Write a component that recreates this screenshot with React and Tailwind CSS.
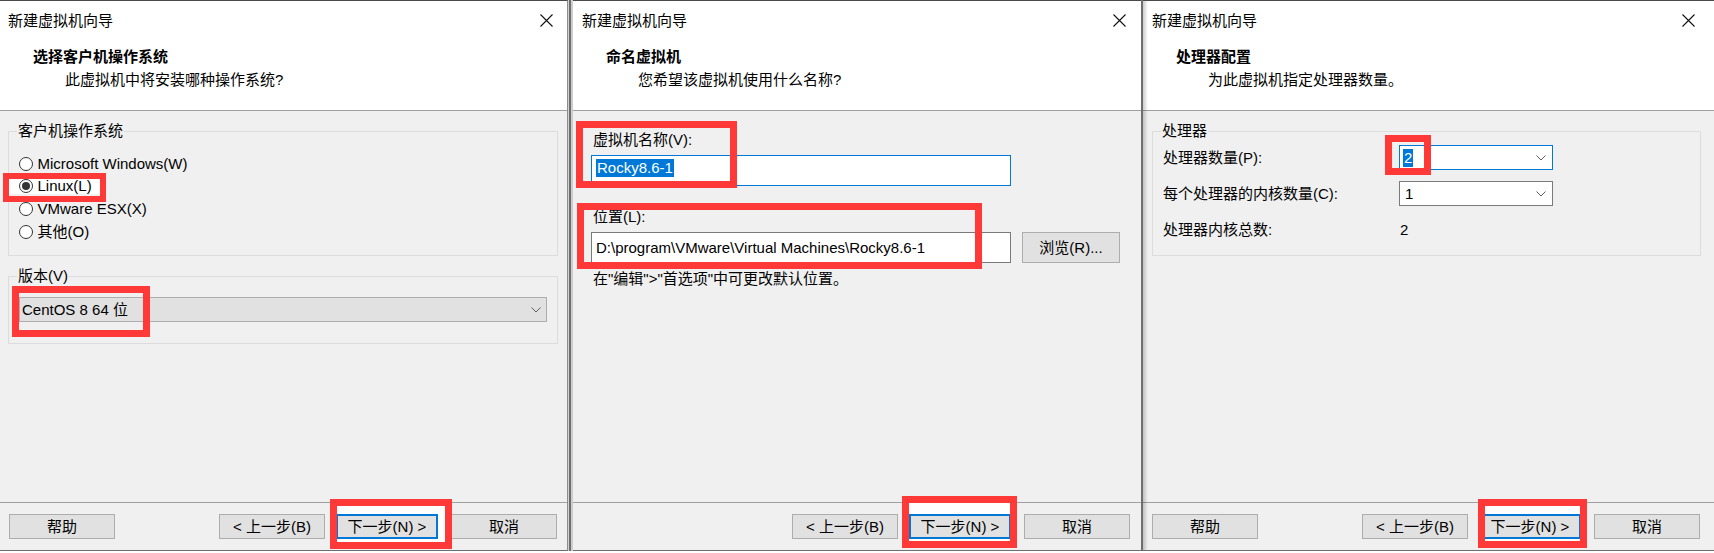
import React from 'react'

const F = "font-['Liberation_Sans','Noto_Sans_CJK_SC',sans-serif]"

function CloseX() {
  return (
    <svg width="13" height="13" viewBox="0 0 13 13">
      <path d="M0.5 0.5L12.5 12.5M12.5 0.5L0.5 12.5" stroke="#111" strokeWidth="1.1" fill="none" />
    </svg>
  )
}

function Chevron() {
  return (
    <svg width="10" height="6" viewBox="0 0 10 6">
      <path d="M0.5 0.5L5 5L9.5 0.5" stroke="#606060" strokeWidth="1" fill="none" />
    </svg>
  )
}

function Radio({ checked, label, hl }) {
  return (
    <div className="h-[22.67px] flex items-center">
      <div className={`inline-flex items-center h-[16px] pl-[9.5px] ${hl ? 'bg-white w-[91px]' : ''}`}>
        <span className="w-[14px] h-[14px] rounded-full border border-[#333] bg-white flex items-center justify-center">
          {checked && <span className="w-[8px] h-[8px] rounded-full bg-[#333]" />}
        </span>
        <span className="ml-[5px] text-[15px] leading-[20px]">{label}</span>
      </div>
    </div>
  )
}

function Btn({ children, className = '', focus }) {
  return (
    <div
      className={`relative h-[25px] flex items-center justify-center bg-[#e1e1e1] text-[15px] leading-[20px] ${
        focus ? 'border-2 border-[#0078d7]' : 'border border-[#adadad]'
      } ${className}`}
    >
      {children}
    </div>
  )
}

function Dialog({ w, title, heading, subtitle, closeCls, body, footer, under, over, extra }) {
  return (
    <div className={`relative shrink-0 flex flex-col h-[551px] bg-[#f0f0f0] border-t border-t-[#4a4a4a] border-b border-b-[#6e6e6e] ${w}`}>
      {under}
      <div className="flex items-center h-[39px] bg-white">
        <span className="flex-1 pl-[8px] text-[15px] leading-[20px]">{title}</span>
        <span className={`flex items-center ${closeCls}`}>
          <CloseX />
        </span>
      </div>
      <div className="h-[71px] bg-white border-b border-[#a0a0a0] pt-[7px]">
        <div className="pl-[33px] text-[15px] font-bold leading-[20px]">{heading}</div>
        <div className="pl-[65px] mt-[3px] text-[15px] leading-[20px]">{subtitle}</div>
      </div>
      <div className="h-[392px] border-b border-[#a0a0a0]">{body}</div>
      <div className="h-[47px] pt-[11px] flex">{footer}</div>
      {over}
      {extra}
    </div>
  )
}

function Group({ label, className, children }) {
  return (
    <div className={`relative border border-[#dcdcdc] ${className}`}>
      <span className="absolute -top-[11px] left-[8px] px-[1px] bg-[#f0f0f0] text-[15px] leading-[20px]">{label}</span>
      {children}
    </div>
  )
}

export default function App() {
  return (
    <div className={`w-[1714px] h-[553px] bg-white flex text-black ${F}`}>
      {/* 选择客户机操作系统 */}
      <Dialog
        w="w-[568px] border-r border-r-[#8c8c8c]"
        title="新建虚拟机向导"
        heading="选择客户机操作系统"
        subtitle="此虚拟机中将安装哪种操作系统?"
        closeCls="pr-[14px]"
        body={
          <div className="pt-[20px]">
            <Group label="客户机操作系统" className="ml-[8px] w-[550px] h-[125px]">
              <div className="pt-[20.5px]">
                <Radio label="Microsoft Windows(W)" />
                <Radio label="Linux(L)" checked hl />
                <Radio label="VMware ESX(X)" />
                <Radio label="其他(O)" />
              </div>
            </Group>
            <Group label="版本(V)" className="mt-[20px] ml-[8px] w-[550px] h-[68px]">
              <div className="pt-[20px] pl-[10px]">
                <div className="w-[528px] h-[25px] bg-[#e1e1e1] border border-[#adadad] flex items-center pl-[2px] pr-[5px]">
                  <span className="flex-1 text-[15px] leading-[20px]">CentOS 8 64 位</span>
                  <Chevron />
                </div>
              </div>
            </Group>
          </div>
        }
        footer={
          <>
            <Btn className="ml-[9px] w-[106px]">帮助</Btn>
            <div className="flex-1" />
            <Btn className="w-[106px]">&lt; 上一步(B)</Btn>
            <Btn focus className="ml-[11px] w-[102px]">下一步(N) &gt;</Btn>
            <Btn className="ml-[13px] mr-[10px] w-[106px]">取消</Btn>
          </>
        }
        under={<div className="absolute left-[337px] top-[505px] w-[108px] h-[36px] bg-white" />}
        over={
          <>
            <div className="absolute left-[3px] top-[172px] w-[103px] h-[29px] border-[6px] border-[#ff3838]" />
            <div className="absolute left-[12px] top-[285px] w-[138px] h-[51px] border-[7px] border-[#ff3838]" />
            <div className="absolute left-[330px] top-[498px] w-[122px] h-[50px] border-[7px] border-[#ff3838]" />
          </>
        }
      />

      <div className="w-[5px] h-[551px] shrink-0 flex">
        <div className="w-[1px] bg-[#d2d2d2]" />
        <div className="w-[2px] bg-[#6e6e6e]" />
        <div className="w-[2px] bg-[#cdcdcd]" />
      </div>

      {/* 命名虚拟机 */}
      <Dialog
        w="w-[568px]"
        title={<span className="pl-[1px]">新建虚拟机向导</span>}
        heading="命名虚拟机"
        subtitle="您希望该虚拟机使用什么名称?"
        closeCls="pr-[15px]"
        body={
          <div className="pt-[19px]">
            <div className="pl-[20px] text-[15px] leading-[20px]">虚拟机名称(V):</div>
            <div className="mt-[5px] ml-[18px] w-[420px] h-[31px] bg-white border border-[#0078d7] flex items-start pt-[3px]">
              <span className="ml-[4px] px-[1px] bg-[#0078d7] text-white text-[15px] leading-[18px]">Rocky8.6-1</span>
            </div>
            <div className="mt-[21px] pl-[20px] text-[15px] leading-[20px]">位置(L):</div>
            <div className="mt-[5px] ml-[18px] flex">
              <div className="w-[420px] h-[31px] bg-white border border-[#7a7a7a] flex items-center pl-[4px]">
                <span className="text-[15px] leading-[20px]">D:\program\VMware\Virtual Machines\Rocky8.6-1</span>
              </div>
              <Btn className="ml-[11px] w-[98px] !h-[31px]">浏览(R)...</Btn>
            </div>
            <div className="mt-[6px] pl-[20px] text-[15px] leading-[20px]">在"编辑"&gt;"首选项"中可更改默认位置。</div>
          </div>
        }
        footer={
          <>
            <div className="flex-1" />
            <Btn className="w-[106px]">&lt; 上一步(B)</Btn>
            <Btn focus className="ml-[11px] w-[102px]">下一步(N) &gt;</Btn>
            <Btn className="ml-[13px] mr-[11px] w-[106px]">取消</Btn>
          </>
        }
        under={<div className="absolute left-[336px] top-[502px] w-[101px] h-[40px] bg-white" />}
        over={
          <>
            <div className="absolute left-[3px] top-[120px] w-[161px] h-[67px] border-[7px] border-[#ff3838]" />
            <div className="absolute left-[4px] top-[202px] w-[405px] h-[66px] border-[7px] border-[#ff3838]" />
            <div className="absolute left-[329px] top-[495px] w-[115px] h-[52px] border-[7px] border-[#ff3838]" />
          </>
        }
      />

      <div className="w-[2px] h-[551px] shrink-0 bg-[#6e6e6e]" />

      {/* 处理器配置 */}
      <Dialog
        w="w-[571px]"
        title={<span className="pl-[1px]">新建虚拟机向导</span>}
        heading="处理器配置"
        subtitle="为此虚拟机指定处理器数量。"
        closeCls="pr-[19px]"
        body={
          <div className="pt-[20px]">
            <Group label="处理器" className="ml-[9px] w-[549px] h-[125px]">
              <div className="pt-[13px]">
                <div className="flex items-center h-[25px]">
                  <span className="w-[246px] pl-[10px] text-[15px] leading-[20px]">处理器数量(P):</span>
                  <div className="w-[154px] h-[25px] bg-white border border-[#0078d7] flex items-center pr-[6px]">
                    <span className="flex-1 flex">
                      <span className="ml-[3px] px-[1px] bg-[#0078d7] text-white text-[15px] leading-[18px]">2</span>
                    </span>
                    <Chevron />
                  </div>
                </div>
                <div className="mt-[11px] flex items-center h-[25px]">
                  <span className="w-[246px] pl-[10px] text-[15px] leading-[20px]">每个处理器的内核数量(C):</span>
                  <div className="w-[154px] h-[25px] bg-white border border-[#7a7a7a] flex items-center pl-[5px] pr-[6px]">
                    <span className="flex-1 text-[15px] leading-[20px]">1</span>
                    <Chevron />
                  </div>
                </div>
                <div className="mt-[11px] flex items-center h-[25px]">
                  <span className="w-[246px] pl-[10px] text-[15px] leading-[20px]">处理器内核总数:</span>
                  <span className="pl-[1px] text-[15px] leading-[20px]">2</span>
                </div>
              </div>
            </Group>
          </div>
        }
        footer={
          <>
            <Btn className="ml-[9px] w-[106px]">帮助</Btn>
            <div className="flex-1" />
            <Btn className="w-[106px]">&lt; 上一步(B)</Btn>
            <Btn focus className="ml-[11px] w-[102px]">下一步(N) &gt;</Btn>
            <Btn className="ml-[13px] mr-[14px] w-[106px]">取消</Btn>
          </>
        }
        under={<div className="absolute left-[342px] top-[505px] w-[95px] h-[36px] bg-white" />}
        over={
          <>
            <div className="absolute left-[242px] top-[134px] w-[46px] h-[40px] border-[7px] border-[#ff3838]" />
            <div className="absolute left-[335px] top-[498px] w-[109px] h-[49px] border-[7px] border-[#ff3838]" />
          </>
        }
        extra={<div className="absolute left-0 top-0 bottom-0 w-[5px] bg-linear-to-r from-black/20 to-transparent" />}
      />
    </div>
  )
}
